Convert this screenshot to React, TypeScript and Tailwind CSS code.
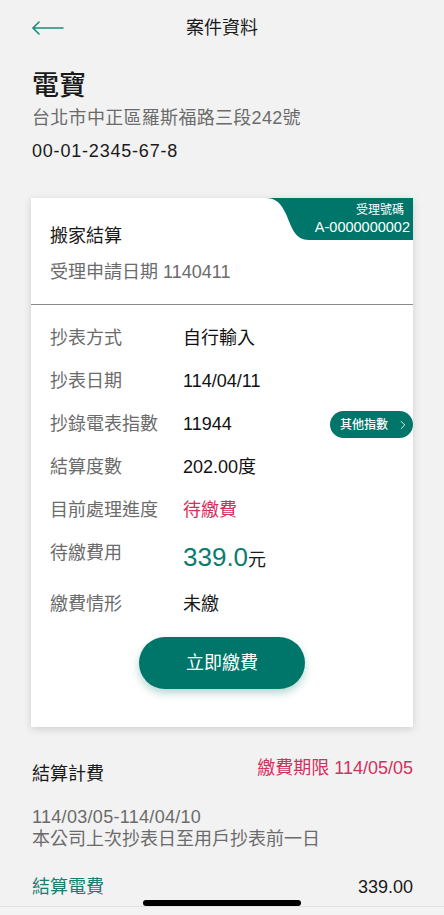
import { ChevronRight } from "lucide-react";

const rows = [
  { label: "抄表方式", value: "自行輸入" },
  { label: "抄表日期", value: "114/04/11" },
  { label: "抄錄電表指數", value: "11944", extra: true },
  { label: "結算度數", value: "202.00度" },
  { label: "目前處理進度", value: "待繳費", red: true },
];

export default function App() {
  return (
    <div
      className="relative h-[915px] w-full overflow-hidden bg-[#f2f2f2] text-[#1a1a1a]"
      style={{ fontFamily: '"Liberation Sans", "Noto Sans CJK TC", sans-serif' }}
    >
      {/* header */}
      <header className="relative flex h-[56px] items-center justify-center">
        <button className="absolute left-[31px] top-[21px]">
          <svg width="33" height="14" viewBox="0 0 33 14" fill="none" stroke="#1f8a7c" strokeWidth="1.6" strokeLinecap="round">
            <path d="M2 7h30M8 1L2 7l6 6" />
          </svg>
        </button>
        <h1 className="text-[18px] leading-none">案件資料</h1>
      </header>

      <section className="px-[32px] pt-[13px]">
        <div className="text-[27px] font-medium leading-[34px]">電寶</div>
        <div className="mt-[2px] text-[18px] leading-[26px] tracking-[0.3px] text-[#6b6b6b]">台北市中正區羅斯福路三段242號</div>
        <div className="mt-[7px] text-[18px] leading-[26px] tracking-[0.8px]">00-01-2345-67-8</div>
      </section>

      {/* card */}
      <div className="relative mx-[31px] mt-[34px] bg-white shadow-[0_2px_8px_rgba(0,0,0,0.15)]">
        <div className="absolute right-0 top-0 h-[42px] w-[148px]">
          <svg className="absolute inset-0" width="148" height="42" viewBox="0 0 148 42">
            <path d="M0 0 C12 0 16 6 21 16 C27 30 30 42 44 42 L148 42 L148 0 Z" fill="#00766b" />
          </svg>
          <div className="relative flex flex-col items-end pr-[3px] pt-[4px] text-white">
            <span className="pr-[6px] text-[12px] leading-[16px]">受理號碼</span>
            <span className="text-[14.5px] leading-[19px]">A-0000000002</span>
          </div>
        </div>

        <div className="px-[19px] pb-[20px] pt-[26px]">
          <div className="text-[18px] leading-[24px]">搬家結算</div>
          <div className="mt-[12px] text-[18px] leading-[24px] text-[#6b6b6b]">受理申請日期 1140411</div>
        </div>
        <div className="h-px bg-[#8a8a8a]" />

        <div className="pt-[12px]">
          {rows.map((r) => (
            <div key={r.label} className="flex h-[43px] items-center pl-[19px] text-[18px]">
              <span className="w-[133px] text-[#6b6b6b]">{r.label}</span>
              <span className={r.red ? "text-[#d4305e]" : "text-[#111]"}>{r.value}</span>
              {r.extra && (
                <span className="ml-auto flex h-[27px] w-[83px] items-center justify-between rounded-full bg-[#00766b] pl-[10px] pr-[3px] text-[12px] font-medium text-white">
                  其他指數
                  <ChevronRight size={14} strokeWidth={1.5} />
                </span>
              )}
            </div>
          ))}
          <div className="flex h-[51px] items-start pl-[19px]">
            <span className="w-[133px] text-[18px] leading-[43px] text-[#6b6b6b]">待繳費用</span>
            <span className="mt-[10px] leading-[30px]">
              <span className="text-[26px] text-[#0a7d70]">339.0</span>
              <span className="text-[18px]">元</span>
            </span>
          </div>
          <div className="flex h-[43px] items-center pl-[19px] text-[18px]">
            <span className="w-[133px] text-[#6b6b6b]">繳費情形</span>
            <span>未繳</span>
          </div>
        </div>

        <div className="flex justify-center pb-[38px] pt-[11px]">
          <button className="h-[52px] w-[166px] rounded-full bg-[#00766b] text-[18px] text-white shadow-[0_4px_8px_rgba(0,118,107,0.3)]">
            立即繳費
          </button>
        </div>
      </div>

      {/* billing */}
      <section className="px-[31px] pt-[29px]">
        <div className="flex items-start justify-between pl-px">
          <span className="pt-[6px] text-[18px] leading-[24px]">結算計費</span>
          <span className="text-[18px] leading-[24px] text-[#d4305e]">繳費期限 114/05/05</span>
        </div>
        <div className="mt-[20px] pl-px text-[18px] leading-[22px] text-[#6b6b6b]">
          <div className="tracking-[0.3px]">114/03/05-114/04/10</div>
          <div>本公司上次抄表日至用戶抄表前一日</div>
        </div>
        <div className="mt-[25px] flex items-center justify-between pl-px text-[18px] leading-[24px]">
          <span className="text-[#1a7f73]">結算電費</span>
          <span>339.00</span>
        </div>
        <div className="mt-[16px] flex items-center justify-between pl-px text-[18px] leading-[24px]">
          <span className="text-[#1a7f73]">分期分攤電費</span>
          <span>0.00</span>
        </div>
      </section>

      {/* bottom fade + home indicator */}
      <div className="absolute bottom-0 left-0 right-0 h-[9px] border-t border-[#e2e2e2] bg-[#f2f2f2]/80" />
      <div className="absolute left-[143px] top-[900px] h-[6px] w-[158px] rounded-full bg-black" />
    </div>
  );
}
